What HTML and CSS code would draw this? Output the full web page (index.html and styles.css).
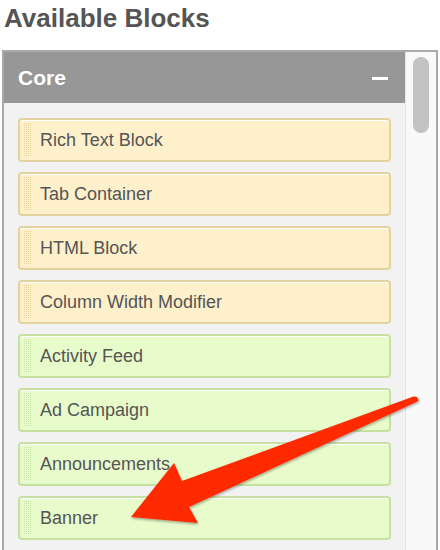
FILE: index.html
```html
<!DOCTYPE html>
<html>
<head>
<meta charset="utf-8">
<link rel="stylesheet" href="styles.css">
</head>
<body>
<h1 class="title">Available Blocks</h1>
<div class="panel">
  <div class="main">
    <div class="header">
      <span class="header-label">Core</span>
      <span class="minus"></span>
    </div>
    <ul class="list">
      <li class="block core"><span class="grip"></span>Rich Text Block</li>
      <li class="block core"><span class="grip"></span>Tab Container</li>
      <li class="block core"><span class="grip"></span>HTML Block</li>
      <li class="block core"><span class="grip"></span>Column Width Modifier</li>
      <li class="block app"><span class="grip"></span>Activity Feed</li>
      <li class="block app"><span class="grip"></span>Ad Campaign</li>
      <li class="block app"><span class="grip"></span>Announcements</li>
      <li class="block app"><span class="grip"></span>Banner</li>
    </ul>
  </div>
  <div class="scrollbar"><div class="thumb"></div></div>
</div>
<svg class="arrow" width="440" height="550" viewBox="0 0 440 550">
  <defs>
    <filter id="sh" x="-10%" y="-10%" width="130%" height="130%">
      <feDropShadow dx="0.5" dy="1.5" stdDeviation="1.2" flood-color="#000" flood-opacity="0.35"/>
    </filter>
  </defs>
  <path d="M413.5 396.5 Q418.5 396 418.5 401 L189 507 L198 523 L131 517 L174 463 L182 481 Z" fill="#ff2a00" filter="url(#sh)"/>
</svg>
</body>
</html>
```
FILE: styles.css
```css
html, body {
  margin: 0;
  padding: 0;
  background: #ffffff;
  font-family: "Liberation Sans", Arial, sans-serif;
  overflow: hidden;
  height: 550px;
}
.title {
  margin: 0;
  padding: 3px 0 0 4px;
  height: 50px;
  box-sizing: border-box;
  font-size: 26px;
  line-height: 30px;
  font-weight: bold;
  color: #555555;
}
.panel {
  margin-left: 2px;
  width: 436px;
  height: 520px;
  box-sizing: border-box;
  border: 2px solid #a9a9a9;
  border-bottom: none;
  display: flex;
  background: #f2f2f2;
}
.main {
  flex: 1;
  display: flex;
  flex-direction: column;
}
.header {
  flex-shrink: 0;
  height: 51px;
  background: #979797;
  display: flex;
  align-items: center;
  justify-content: space-between;
  padding: 0 17px 0 14px;
}
.header-label {
  color: #ffffff;
  font-weight: bold;
  font-size: 21px;
  padding-top: 1px;
}
.minus {
  width: 16px;
  height: 3px;
  background: #ffffff;
  margin-top: 2px;
}
.list {
  list-style: none;
  margin: 0;
  padding: 15px 14px 0 14px;
  display: flex;
  flex-direction: column;
  gap: 10px;
}
.block {
  flex-shrink: 0;
  height: 44px;
  box-sizing: border-box;
  border: 2px solid;
  border-radius: 4px;
  display: flex;
  align-items: center;
  font-size: 18px;
  color: #555555;
  padding-left: 4px;
}
.core {
  background: #fdf0cb;
  border-color: #e3d29e;
  box-shadow: inset 0 1px 0 #ffffff;
}
.app {
  background: #e8fbcb;
  border-color: #c6e0a2;
  box-shadow: inset 0 1px 0 #ffffff;
}
.grip {
  width: 7px;
  height: 34px;
  margin-right: 9px;
  background-size: 2px 2px;
}
.core .grip {
  background-image: radial-gradient(circle at 0.5px 0.5px, #e6d49c 0.8px, transparent 0.9px);
}
.app .grip {
  background-image: radial-gradient(circle at 0.5px 0.5px, #cbe3a9 0.8px, transparent 0.9px);
}
.scrollbar {
  width: 31px;
  background: #f9f9f9;
  border-left: 1px solid #e6e6e6;
  box-sizing: border-box;
  padding: 5px 0 0 7px;
}
.thumb {
  width: 16px;
  height: 76px;
  border-radius: 8px;
  background: #c2c2c2;
}
.arrow {
  position: absolute;
  left: 0;
  top: 0;
  pointer-events: none;
}
```
